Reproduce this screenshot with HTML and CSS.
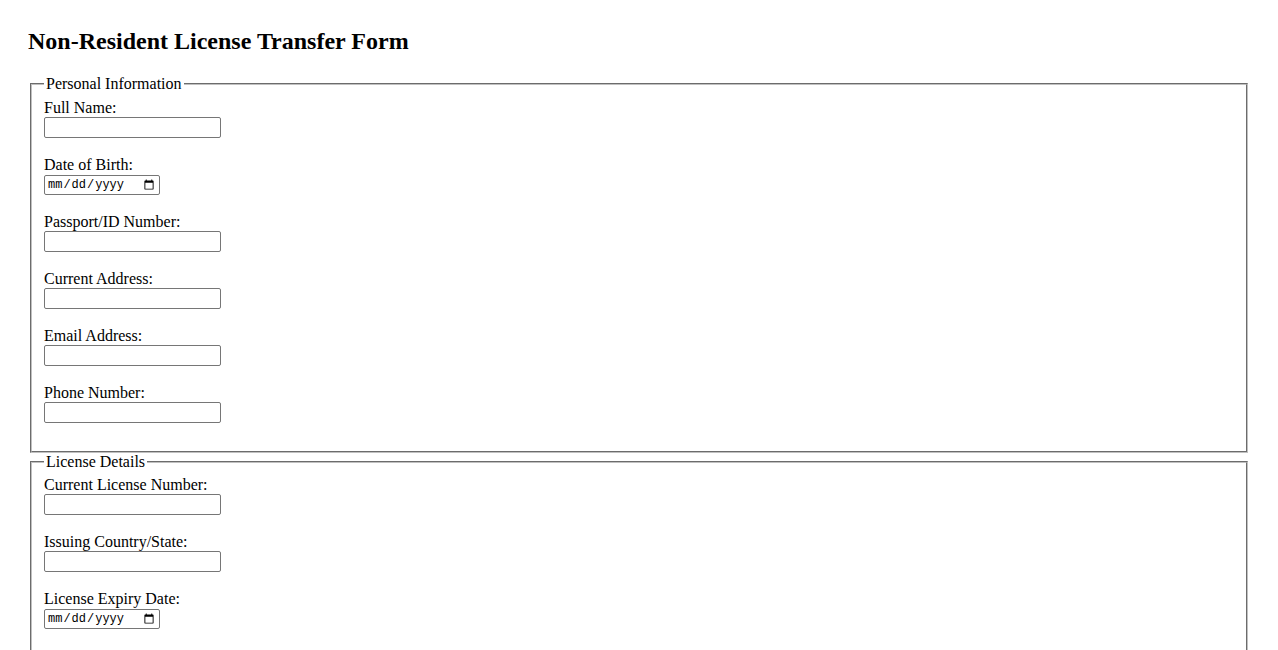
FILE: index.html
```html
<!DOCTYPE html>
<html lang="en">
<head>
<meta charset="utf-8">
<title>Non-Resident License Transfer Form</title>
<link rel="stylesheet" href="styles.css">
</head>
<body>
<h2 class="title">Non-Resident License Transfer Form</h2>
<form class="form">
  <fieldset class="section">
    <legend class="section-legend">Personal Information</legend>
    <div class="field"><label class="field-label" for="fullName">Full Name:</label><input class="text-input" type="text" id="fullName"></div>
    <div class="field"><label class="field-label" for="dob">Date of Birth:</label><input class="date-input" type="date" id="dob"></div>
    <div class="field"><label class="field-label" for="passport">Passport/ID Number:</label><input class="text-input" type="text" id="passport"></div>
    <div class="field"><label class="field-label" for="address">Current Address:</label><input class="text-input" type="text" id="address"></div>
    <div class="field"><label class="field-label" for="email">Email Address:</label><input class="text-input" type="email" id="email"></div>
    <div class="field"><label class="field-label" for="phone">Phone Number:</label><input class="text-input" type="tel" id="phone"></div>
  </fieldset>
  <fieldset class="section">
    <legend class="section-legend">License Details</legend>
    <div class="field"><label class="field-label" for="licNum">Current License Number:</label><input class="text-input" type="text" id="licNum"></div>
    <div class="field"><label class="field-label" for="issuer">Issuing Country/State:</label><input class="text-input" type="text" id="issuer"></div>
    <div class="field"><label class="field-label" for="expiry">License Expiry Date:</label><input class="date-input" type="date" id="expiry"></div>
  </fieldset>
</form>
</body>
</html>
```

FILE: styles.css
```css
body {
  margin: 28px;
  font-family: "Liberation Serif", "Times New Roman", serif;
  font-size: 16px;
  color: #000;
  background: #fff;
}

.title {
  font-size: 24px;
  font-weight: bold;
  margin: 0 0 20px 0;
}

.form {
  margin: 0;
}

.section {
  margin: 0 2px;
  padding: 5.6px 12px 10px;
  border: 2px groove #c0c0c0;
}

.section-legend {
  padding: 0 2px;
}

.field {
  margin-bottom: 18px;
}

.field-label {
  display: block;
}

.text-input {
  box-sizing: border-box;
  width: 177px;
  height: 21px;
  margin: 0;
  padding: 1px 2px;
  border: 1px solid #767676;
  border-radius: 2px;
  font-size: 13.33px;
  font-family: "Liberation Sans", Arial, sans-serif;
}

.date-input {
  box-sizing: border-box;
  width: 116px;
  height: 20px;
  margin: 0;
  padding: 0 2px;
  border: 1px solid #767676;
  border-radius: 2px;
  font-size: 12px;
  font-family: "Liberation Mono", monospace;
}
```
